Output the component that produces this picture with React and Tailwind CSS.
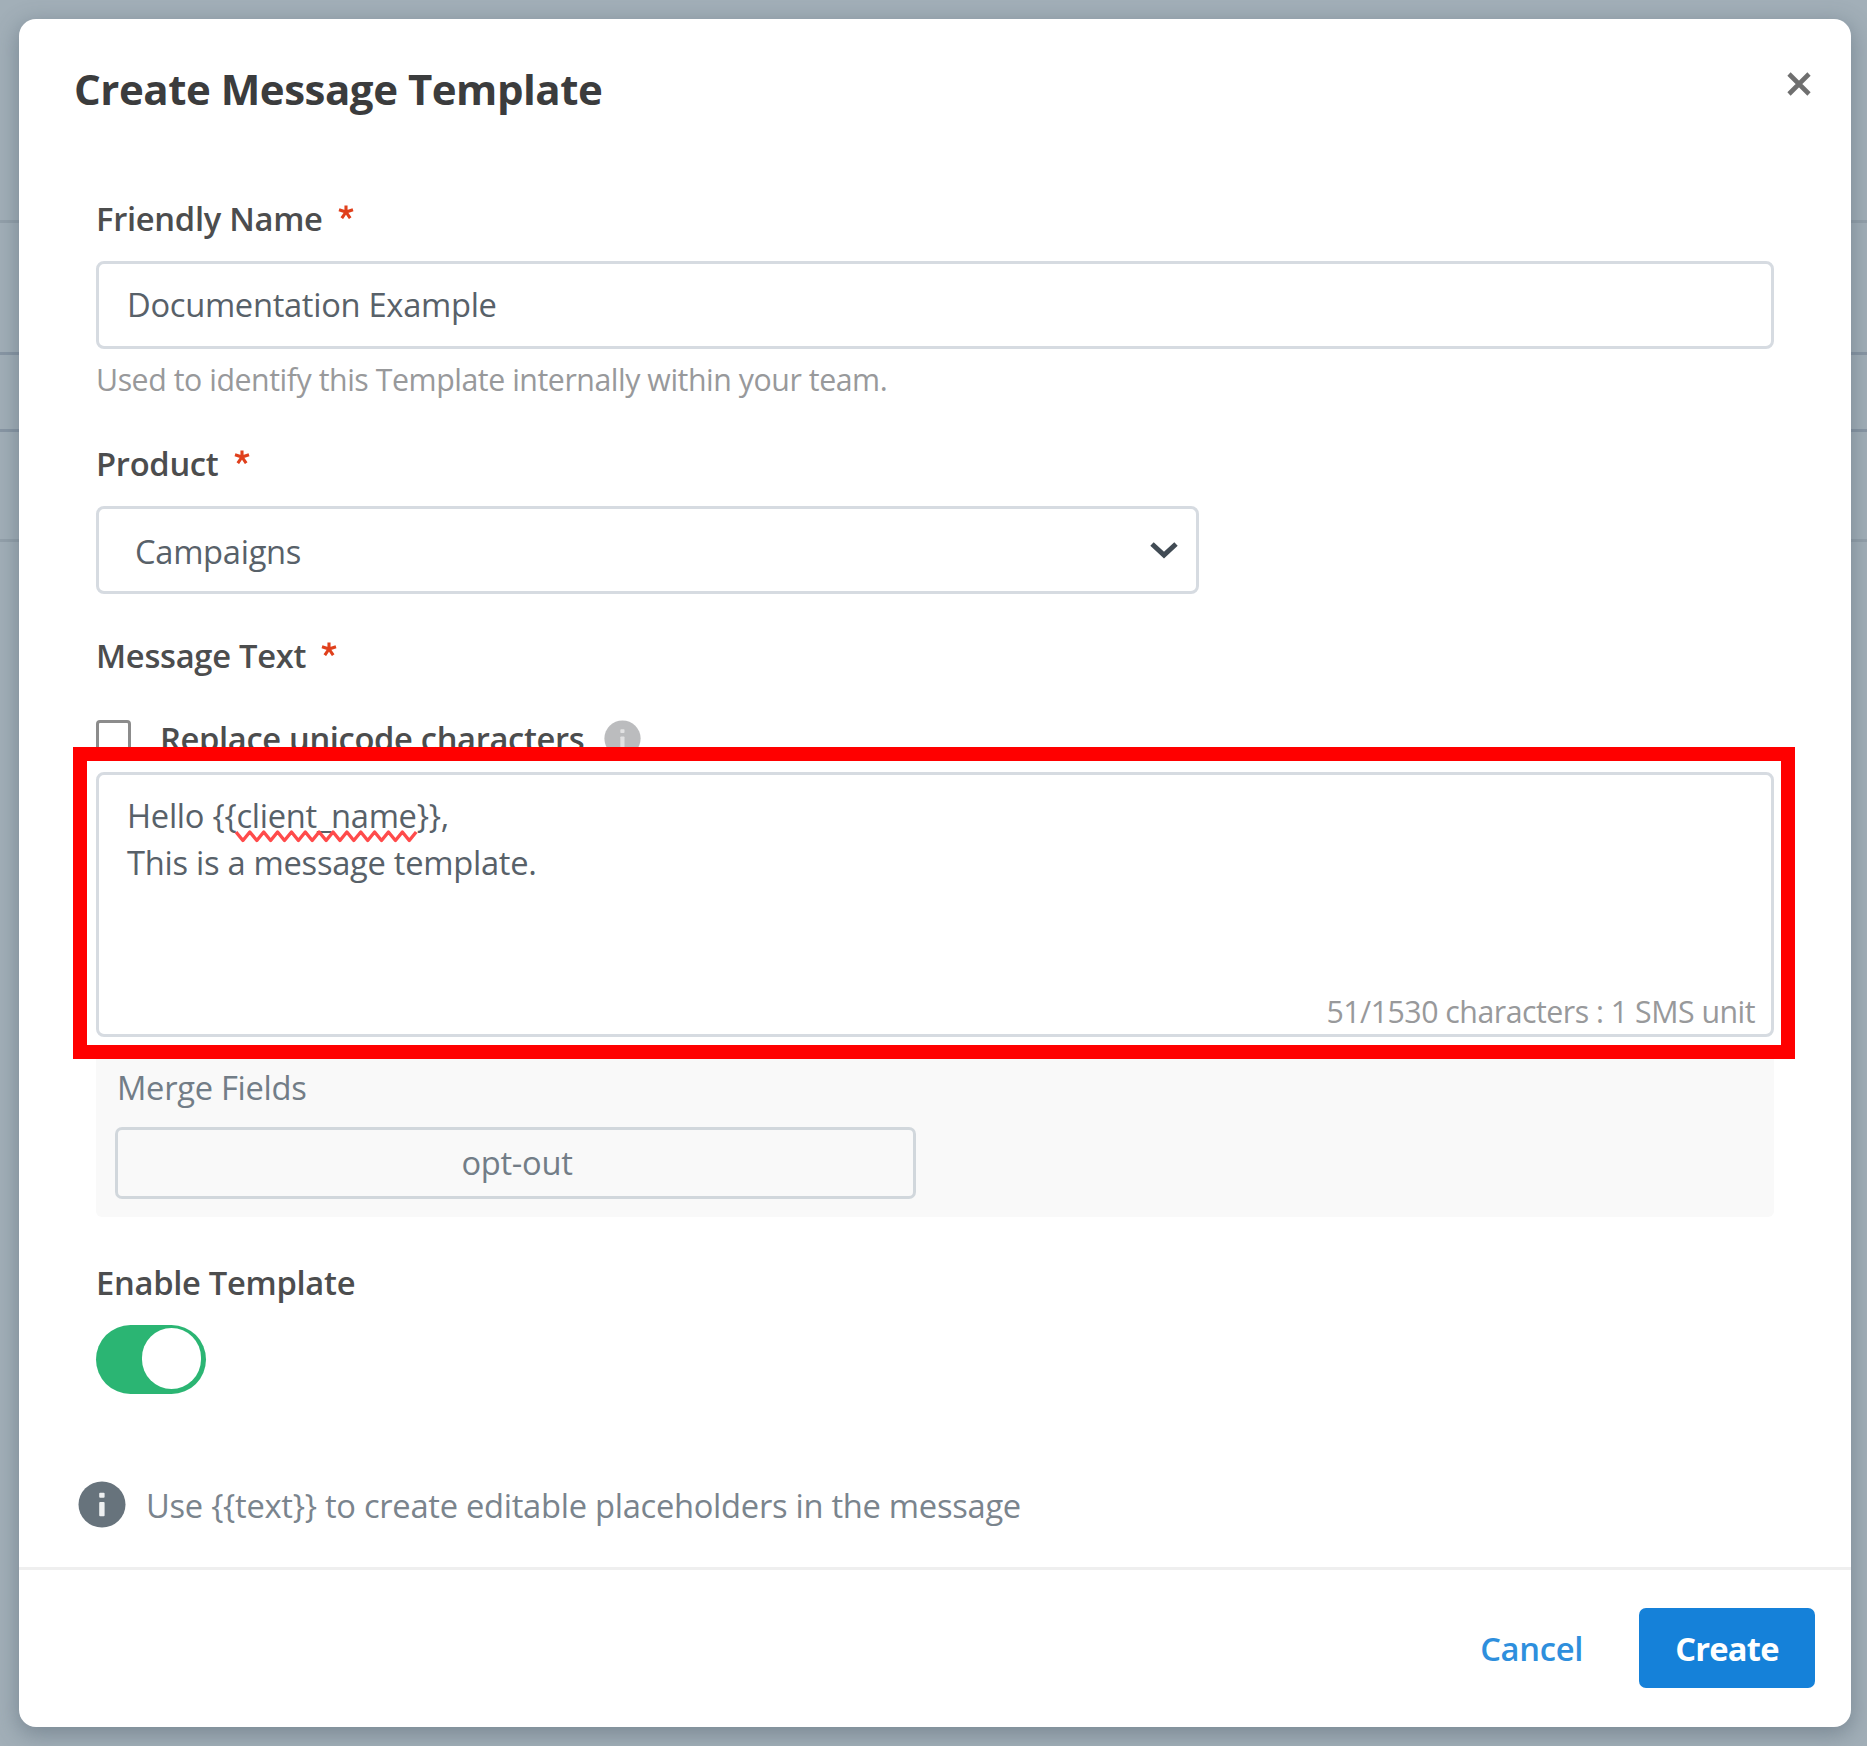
const Label = ({ children, required, className = "", starClass = "" }) => (
  <div className={`flex h-[46px] items-center whitespace-nowrap text-[32.7px] leading-[46px] font-semibold tracking-[-0.28px] text-[#4c4d4e] ${className}`}>
    <span>{children}</span>
    {required && (
      <svg viewBox="0 0 16 14" className={`mb-[15px] h-[14px] w-[16px] ${starClass}`} aria-hidden="true">
        <path d="M8 8V0.5M8 7L1 4.8M8 7l7-2.2M8 7l-4.2 6.2M8 7l4.2 6.2" fill="none" stroke="#e0401c" strokeWidth="3.1" />
      </svg>
    )}
  </div>
);

const InfoIcon = ({ className, ink }) => (
  <svg viewBox="0 0 48 48" preserveAspectRatio="none" className={className} aria-hidden="true">
    <circle cx="24" cy="24" r="23.5" fill="currentColor" />
    <rect x="21.2" y="12" width="5.4" height="5" rx="1" fill={ink} />
    <rect x="21.2" y="21.5" width="5.4" height="14.5" rx="1" fill={ink} />
  </svg>
);

const wave = () => {
  let d = "M0 1";
  for (let i = 1; i <= 26; i++) d += ` L${(i * 6.92).toFixed(1)} ${i % 2 ? 9.5 : 1}`;
  return d;
};

function Backdrop() {
  return (
    <div className="absolute inset-0 flex flex-col">
      <div className="h-[223px] border-b-[3px] border-[#93a0aa]" />
      <div className="h-[132px] border-b-[3px] border-[#8896a4]" />
      <div className="h-[77px] border-b-[3px] border-[#8896a4]" />
      <div className="h-[110px] border-b-[3px] border-[#93a0aa]" />
    </div>
  );
}

export default function App() {
  return (
    <div className="relative h-[1746px] w-[1867px] overflow-hidden bg-[#a2afb8] pt-[19px] pl-[19px] font-['Open_Sans','Noto_Sans',sans-serif]">
      <Backdrop />
      <div className="relative flex h-[1708px] w-[1832px] flex-col rounded-[17px] bg-white shadow-[0_6px_22px_2px_rgba(70,85,100,0.42)]">
        <header className="flex h-[97px] items-start justify-between pt-[42px] pr-[40px] pl-[55px]">
          <h1 className="text-[42px] leading-[56px] font-bold tracking-[-0.47px] whitespace-nowrap text-[#3b3c3d]">Create Message Template</h1>
          <svg viewBox="0 0 24 24" className="mt-[11px] h-[24px] w-[24px]" aria-label="Close">
            <path d="M2 2L22 22M22 2L2 22" stroke="#6f6f6f" strokeWidth="4.6" fill="none" />
          </svg>
        </header>

        <main className="flex flex-col pr-[77px] pl-[77px]">
          <Label required className="mt-[80px]" starClass="ml-[15px]">Friendly Name</Label>
          <div className="mt-[19px] flex h-[88px] items-center rounded-[8px] border-[3px] border-[#d6dbe1] pb-[1px] pl-[28px] text-[32.7px] leading-[46px] tracking-[-0.3px] text-[#586169]">
            <span className="whitespace-nowrap">Documentation Example</span>
          </div>
          <p className="mt-[9px] h-[44px] text-[30.3px] leading-[44px] tracking-[-0.45px] whitespace-nowrap text-[#98999b]">Used to identify this Template internally within your team.</p>

          <Label required className="mt-[39px]" starClass="ml-[16px]">Product</Label>
          <div className="mt-[19px] flex h-[88px] w-[1103px] items-center justify-between rounded-[8px] border-[3px] border-[#d6dbe1] pr-[17px] pl-[36px] text-[32.7px] leading-[46px] tracking-[-0.3px] text-[#586169]">
            <span className="pt-[3px] whitespace-nowrap">Campaigns</span>
            <svg viewBox="0 0 30 18" className="h-[18px] w-[30px]" aria-hidden="true">
              <path d="M3 3L15 14L27 3" fill="none" stroke="#414b54" strokeWidth="5" />
            </svg>
          </div>

          <Label required className="mt-[39px]" starClass="ml-[15px]">Message Text</Label>
          <div className="mt-[37px] flex h-[56px] items-start">
            <div className="mt-[4px] h-[34px] w-[35px] rounded-[4px] border-[3px] border-[#8c8c8c]" />
            <Label className="ml-[29px] tracking-[-0.34px]">Replace unicode characters</Label>
            <InfoIcon className="mt-[4px] ml-[20px] h-[37px] w-[37px] text-[#bbbcbe]" ink="#e2e2e3" />
          </div>

          <div className="relative z-10 -mt-[25px] -mr-[21px] -ml-[23px] h-[312px] w-[1722px] border-[14px] border-[#ff0000] bg-white pt-[11px] pl-[9px]">
            <div className="flex h-[265px] w-[1678px] flex-col justify-between rounded-[8px] border-[3px] border-[#d6dbe1] pt-[18px] pr-[16px] pl-[28px] text-[32.7px] leading-[46.5px] text-[#586169]">
              <div className="tracking-[-0.28px] whitespace-nowrap">
                <div>
                  Hello {"{{"}
                  <span className="relative">
                    client_name
                    <svg viewBox="0 0 180 11" preserveAspectRatio="none" className="absolute bottom-[-4px] left-0 h-[11px] w-full overflow-visible" aria-hidden="true">
                      <path d={wave()} fill="none" stroke="#ff4b4b" strokeWidth="3.4" strokeLinejoin="round" />
                    </svg>
                  </span>
                  {"}},"}
                </div>
                <div>This is a message template.</div>
              </div>
              <div className="h-[44px] text-right text-[30.3px] leading-[44px] tracking-[-0.5px] whitespace-nowrap text-[#98999b]">51/1530 characters : 1 SMS unit</div>
            </div>
          </div>

          <div className="-mt-[5px] h-[163px] rounded-[6px] bg-[#f9f9f9] pt-[11px] pl-[19px] text-[32.7px] leading-[46px] tracking-[-0.3px] text-[#727d87]">
            <div className="pl-[2px] whitespace-nowrap">Merge Fields</div>
            <div className="mt-[16px] flex h-[72px] w-[801px] items-center justify-center rounded-[7px] border-[3px] border-[#d1d7dc] pb-[1px] pl-[3px]">
              <span className="whitespace-nowrap">opt-out</span>
            </div>
          </div>

          <Label className="mt-[43px]">Enable Template</Label>
          <div className="mt-[19px] flex h-[69px] w-[110px] items-center justify-end rounded-full bg-[#2bb573] pr-[5px] pb-[2px]">
            <div className="h-[61px] w-[59px] rounded-full bg-white" />
          </div>
        </main>

        <div className="mt-[86px] flex h-[48px] items-center pl-[59px]">
          <InfoIcon className="h-[47px] w-[48px] text-[#67737c]" ink="#eef0f1" />
          <span className="ml-[20px] pt-[4px] text-[32.7px] leading-[46px] tracking-[-0.28px] whitespace-nowrap text-[#7a848d]">
            Use {"{{text}}"} to create editable placeholders in the message
          </span>
        </div>

        <footer className="mt-[39px] flex flex-1 items-start justify-end border-t-[3px] border-[#efefef] pt-[38px] pr-[36px] text-[32.7px] leading-[46px]">
          <button className="mt-[18px] mr-[56px] font-semibold tracking-[-0.3px] whitespace-nowrap text-[#2e8fdd]">Cancel</button>
          <button className="flex h-[80px] w-[176px] items-center justify-center rounded-[7px] bg-[#1581d9] pt-[2px] font-bold tracking-[-0.8px] whitespace-nowrap text-white">Create</button>
        </footer>
      </div>
    </div>
  );
}
